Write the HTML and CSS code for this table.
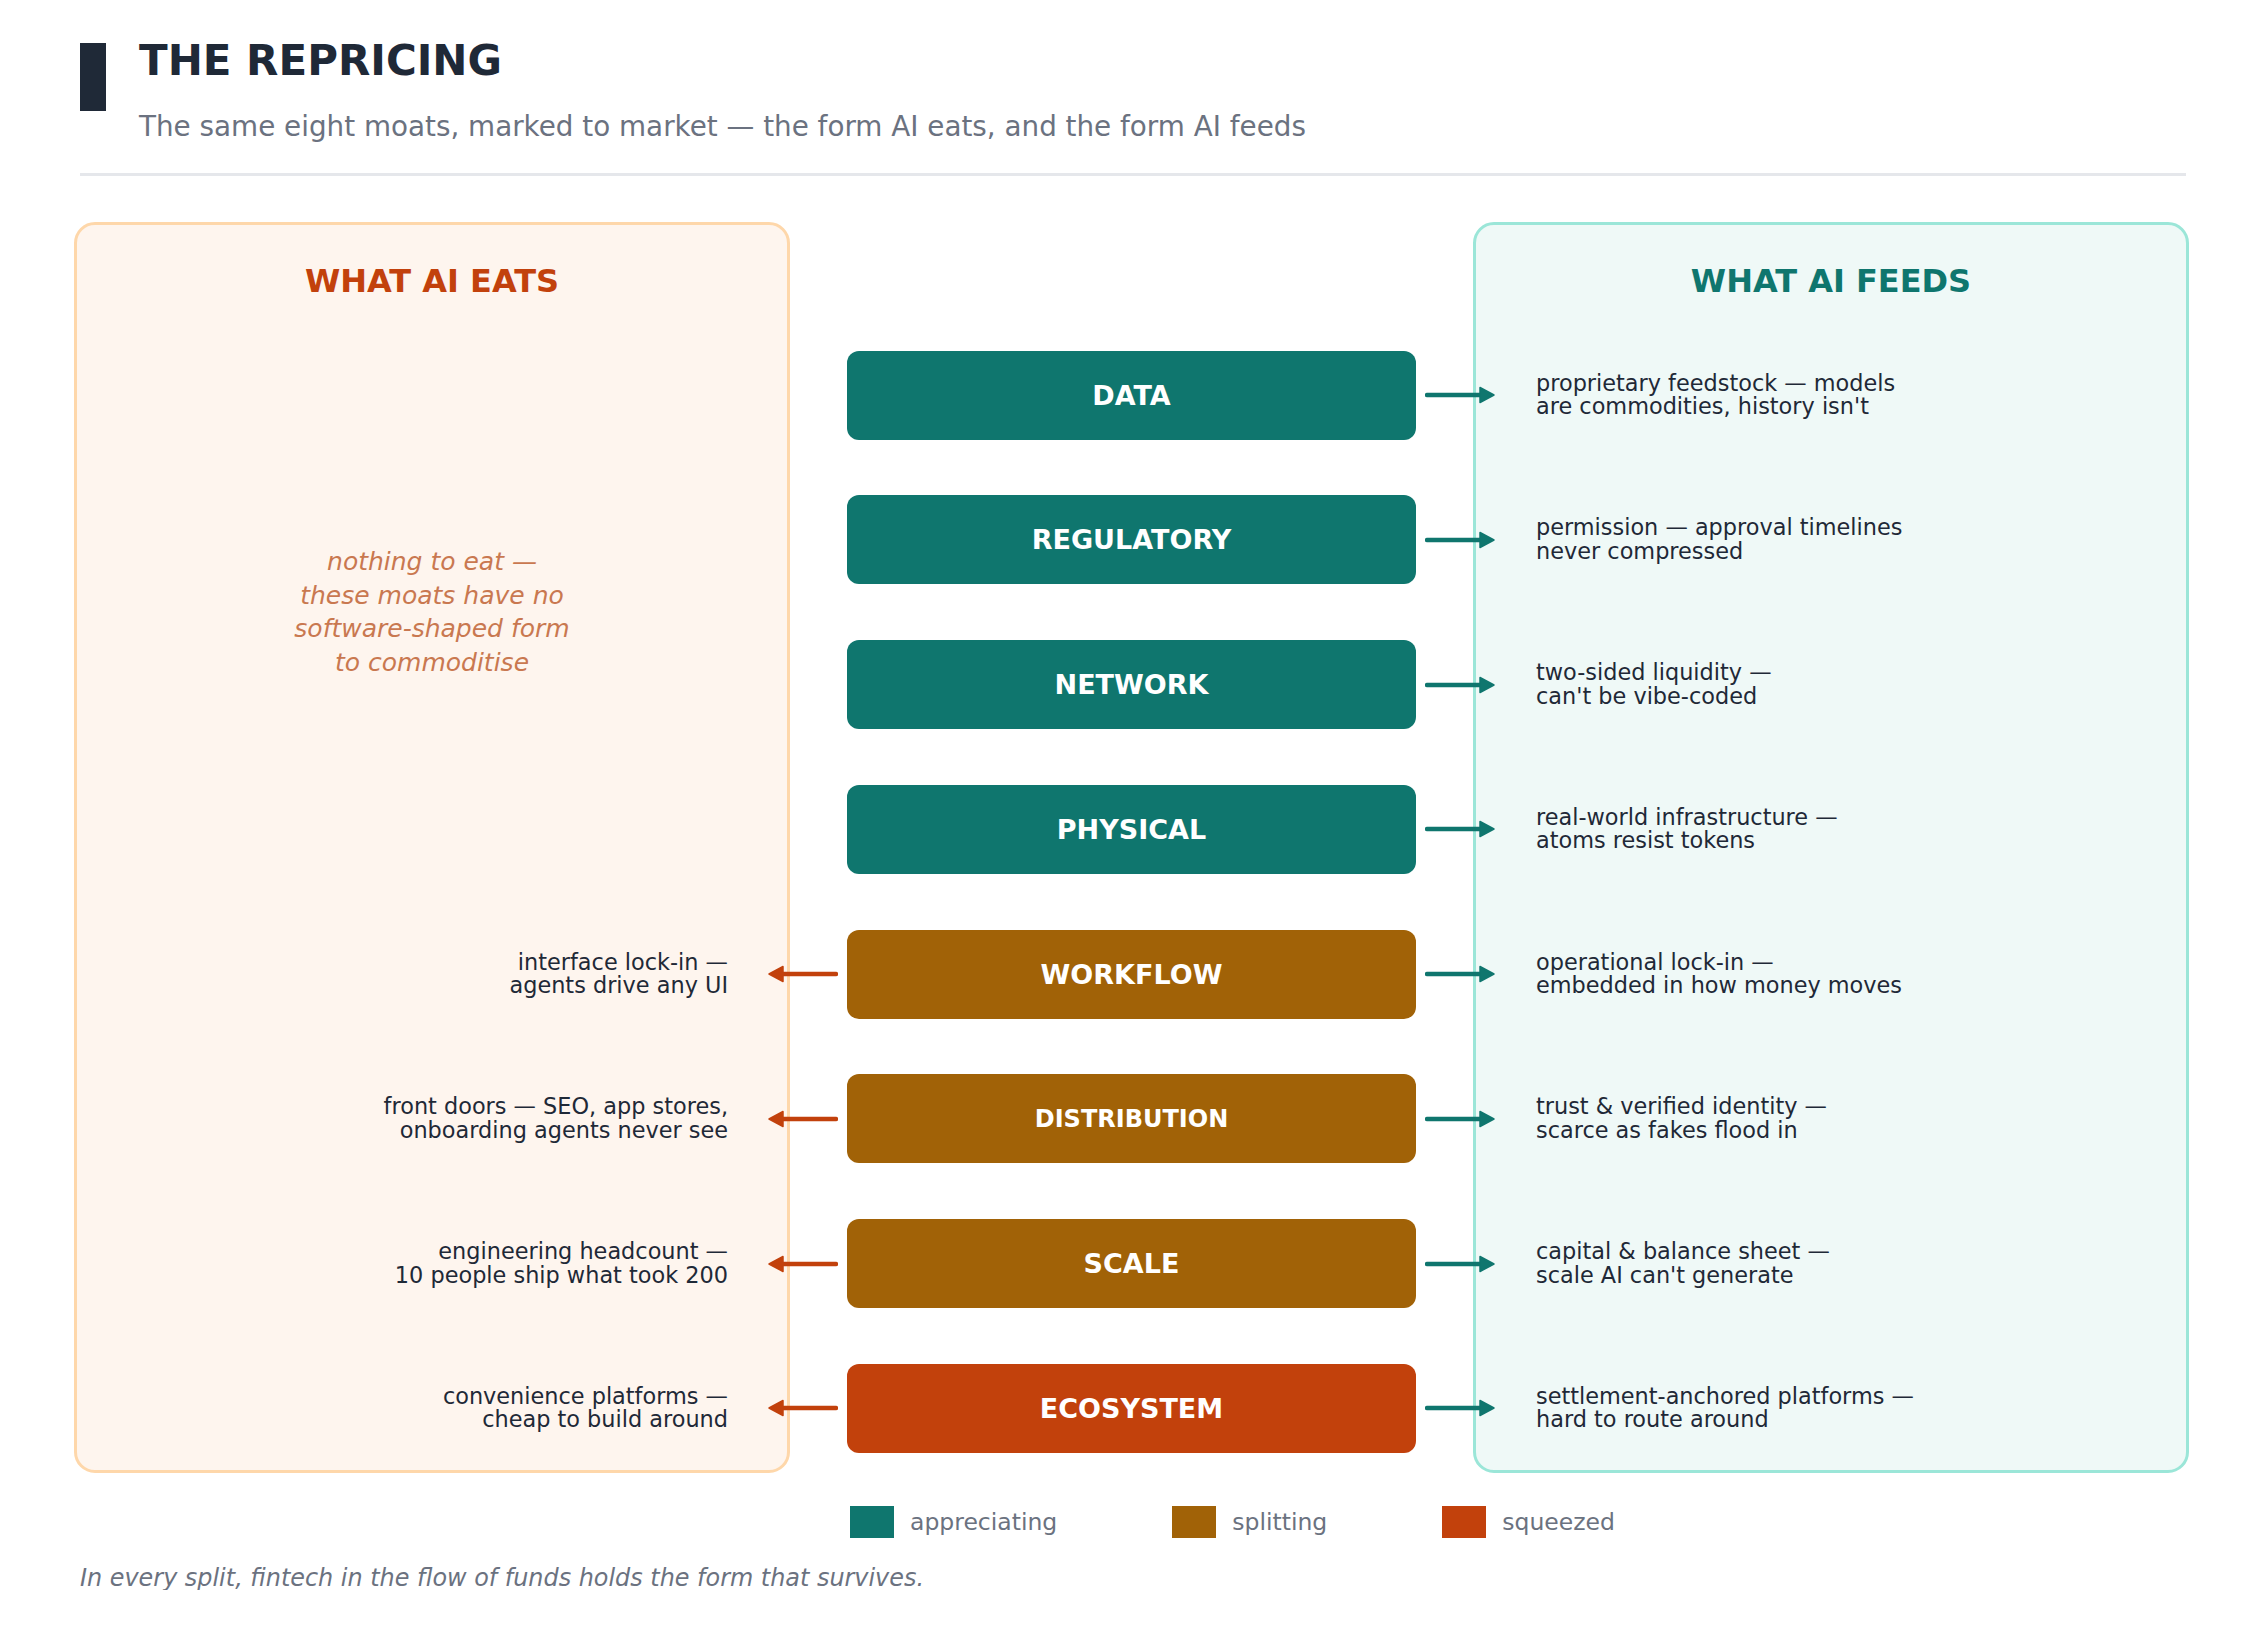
FILE: index.html
```html
<!DOCTYPE html>
<html lang="en">
<head>
<meta charset="utf-8">
<title>The Repricing</title>
<link rel="stylesheet" href="styles.css">
</head>
<body>
<div class="page">
  <header class="header">
    <div class="accent"></div>
    <div class="heading">
      <h1 class="title">THE REPRICING</h1>
      <p class="subtitle">The same eight moats, marked to market — the form AI eats, and the form AI feeds</p>
    </div>
  </header>
  <div class="divider"></div>

  <section class="board">
    <div class="panel panel-eats"><h2 class="panel-title">WHAT AI EATS</h2></div>
    <div class="panel panel-feeds"><h2 class="panel-title">WHAT AI FEEDS</h2></div>

    <div class="rows">
      <p class="note">nothing to eat —<br>these moats have no<br>software-shaped form<br>to commoditise</p>

      <div class="box teal">DATA</div>
      <svg class="arrow arrow-r" viewBox="0 0 70 20" width="70" height="20"><path class="shaft" d="M2 10 H56"/><path class="head" d="M69 10 L55 2.5 L55 17.5 Z"/></svg>
      <p class="desc desc-r">proprietary feedstock — models<br>are commodities, history isn't</p>

      <div class="box teal">REGULATORY</div>
      <svg class="arrow arrow-r" viewBox="0 0 70 20" width="70" height="20"><path class="shaft" d="M2 10 H56"/><path class="head" d="M69 10 L55 2.5 L55 17.5 Z"/></svg>
      <p class="desc desc-r">permission — approval timelines<br>never compressed</p>

      <div class="box teal">NETWORK</div>
      <svg class="arrow arrow-r" viewBox="0 0 70 20" width="70" height="20"><path class="shaft" d="M2 10 H56"/><path class="head" d="M69 10 L55 2.5 L55 17.5 Z"/></svg>
      <p class="desc desc-r">two-sided liquidity —<br>can't be vibe-coded</p>

      <div class="box teal">PHYSICAL</div>
      <svg class="arrow arrow-r" viewBox="0 0 70 20" width="70" height="20"><path class="shaft" d="M2 10 H56"/><path class="head" d="M69 10 L55 2.5 L55 17.5 Z"/></svg>
      <p class="desc desc-r">real-world infrastructure —<br>atoms resist tokens</p>

      <p class="desc desc-l">interface lock-in —<br>agents drive any UI</p>
      <svg class="arrow arrow-l" viewBox="0 0 70 20" width="70" height="20"><path class="shaft" d="M68 10 H14"/><path class="head" d="M1 10 L15 2.5 L15 17.5 Z"/></svg>
      <div class="box amber">WORKFLOW</div>
      <svg class="arrow arrow-r" viewBox="0 0 70 20" width="70" height="20"><path class="shaft" d="M2 10 H56"/><path class="head" d="M69 10 L55 2.5 L55 17.5 Z"/></svg>
      <p class="desc desc-r">operational lock-in —<br>embedded in how money moves</p>

      <p class="desc desc-l">front doors — SEO, app stores,<br>onboarding agents never see</p>
      <svg class="arrow arrow-l" viewBox="0 0 70 20" width="70" height="20"><path class="shaft" d="M68 10 H14"/><path class="head" d="M1 10 L15 2.5 L15 17.5 Z"/></svg>
      <div class="box amber long">DISTRIBUTION</div>
      <svg class="arrow arrow-r" viewBox="0 0 70 20" width="70" height="20"><path class="shaft" d="M2 10 H56"/><path class="head" d="M69 10 L55 2.5 L55 17.5 Z"/></svg>
      <p class="desc desc-r">trust &amp; verified identity —<br>scarce as fakes flood in</p>

      <p class="desc desc-l">engineering headcount —<br>10 people ship what took 200</p>
      <svg class="arrow arrow-l" viewBox="0 0 70 20" width="70" height="20"><path class="shaft" d="M68 10 H14"/><path class="head" d="M1 10 L15 2.5 L15 17.5 Z"/></svg>
      <div class="box amber">SCALE</div>
      <svg class="arrow arrow-r" viewBox="0 0 70 20" width="70" height="20"><path class="shaft" d="M2 10 H56"/><path class="head" d="M69 10 L55 2.5 L55 17.5 Z"/></svg>
      <p class="desc desc-r">capital &amp; balance sheet —<br>scale AI can't generate</p>

      <p class="desc desc-l">convenience platforms —<br>cheap to build around</p>
      <svg class="arrow arrow-l" viewBox="0 0 70 20" width="70" height="20"><path class="shaft" d="M68 10 H14"/><path class="head" d="M1 10 L15 2.5 L15 17.5 Z"/></svg>
      <div class="box red">ECOSYSTEM</div>
      <svg class="arrow arrow-r" viewBox="0 0 70 20" width="70" height="20"><path class="shaft" d="M2 10 H56"/><path class="head" d="M69 10 L55 2.5 L55 17.5 Z"/></svg>
      <p class="desc desc-r">settlement-anchored platforms —<br>hard to route around</p>
    </div>

    <div class="legend">
      <div class="legend-item"><span class="swatch teal"></span><span class="legend-label">appreciating</span></div>
      <div class="legend-item"><span class="swatch amber"></span><span class="legend-label">splitting</span></div>
      <div class="legend-item"><span class="swatch red"></span><span class="legend-label">squeezed</span></div>
    </div>
  </section>

  <p class="footer">In every split, fintech in the flow of funds holds the form that survives.</p>
</div>
</body>
</html>
```

FILE: styles.css
```css
* { box-sizing: border-box; }

html, body {
  margin: 0;
  padding: 0;
  background: #ffffff;
}

body {
  font-family: "DejaVu Sans", "Noto Sans", sans-serif;
  color: #1f2937;
}

.page {
  width: 2263px;
  padding: 40px 74px 0 74px;
}

/* Header */
.header {
  display: flex;
  align-items: flex-start;
  padding-left: 6px;
}

.accent {
  width: 26px;
  height: 68px;
  margin-top: 3px;
  background: #1f2937;
  flex: none;
}

.heading {
  margin-left: 33px;
}

.title {
  margin: 0;
  font-size: 42px;
  line-height: 42px;
  font-weight: bold;
  color: #1f2937;
}

.subtitle {
  margin: 31px 0 0 0;
  font-size: 27.8px;
  line-height: 27.5px;
  color: #6b7280;
}

.divider {
  height: 3px;
  background: #e5e7eb;
  margin: 32px 3px 0 6px;
}

/* Board */
.board {
  display: grid;
  grid-template-columns: 716px 683px 716px;
  grid-template-rows: 129px auto 20px auto;
  margin-top: 46px;
}

.panel {
  grid-row: 1 / 4;
  border: 3px solid;
  border-radius: 21px;
  padding-top: 40px;
}

.panel-eats {
  grid-column: 1;
  background: #fef5ee;
  border-color: #fed7aa;
}

.panel-feeds {
  grid-column: 3;
  background: #eff9f7;
  border-color: #9be6d8;
}

.panel-title {
  margin: 0;
  text-align: center;
  font-size: 32px;
  line-height: 32px;
  font-weight: bold;
}

.panel-eats .panel-title { color: #c2410c; }
.panel-feeds .panel-title { color: #0f766e; }

.rows {
  grid-row: 2;
  grid-column: 1 / 4;
  display: grid;
  grid-template-columns: minmax(0, 1fr) 70px 569px 70px minmax(0, 1fr);
  grid-template-rows: repeat(8, 89px);
  column-gap: 9px;
  row-gap: 55.75px;
}

.note {
  grid-column: 1;
  grid-row: 1 / span 4;
  align-self: center;
  justify-self: start;
  width: 716px;
  margin: 0;
  text-align: center;
  font-style: italic;
  font-size: 25px;
  line-height: 33.5px;
  color: #c97850;
}

.box {
  grid-column: 3;
  display: flex;
  align-items: center;
  justify-content: center;
  border-radius: 12px;
  color: #ffffff;
  font-weight: bold;
  font-size: 27px;
  line-height: 1;
}

.box.long { font-size: 24px; }

.teal { background: #0f766e; }
.amber { background: #a16207; }
.red { background: #c2410c; }

.arrow {
  align-self: center;
  display: block;
}

.arrow-l { grid-column: 2; }
.arrow-r { grid-column: 4; }

.arrow .shaft {
  fill: none;
  stroke-width: 4.5;
  stroke-linecap: round;
}

.arrow .head {
  stroke-width: 1.5;
  stroke-linejoin: round;
}

.arrow-l .shaft { stroke: #c2410c; }
.arrow-l .head { fill: #c2410c; stroke: #c2410c; }
.arrow-r .shaft { stroke: #0f766e; }
.arrow-r .head { fill: #0f766e; stroke: #0f766e; }

.desc {
  margin: 0;
  align-self: center;
  font-size: 22.4px;
  line-height: 23.5px;
  color: #1f2937;
  white-space: nowrap;
}

.desc-l {
  grid-column: 1;
  text-align: right;
  padding-right: 31px;
}

.desc-r {
  grid-column: 5;
  padding-left: 32px;
}

/* Legend */
.legend {
  grid-row: 4;
  grid-column: 2 / 4;
  display: flex;
  align-items: center;
  gap: 115px;
  margin-top: 33px;
  padding-left: 60px;
}

.legend-item {
  display: flex;
  align-items: center;
  gap: 16px;
}

.swatch {
  display: block;
  width: 44px;
  height: 32px;
}

.legend-label {
  font-size: 23.5px;
  line-height: 32px;
  color: #6b7280;
}

/* Footer */
.footer {
  margin: 29px 0 0 6px;
  font-style: italic;
  font-size: 23.9px;
  line-height: 23px;
  color: #6b7280;
}
```
